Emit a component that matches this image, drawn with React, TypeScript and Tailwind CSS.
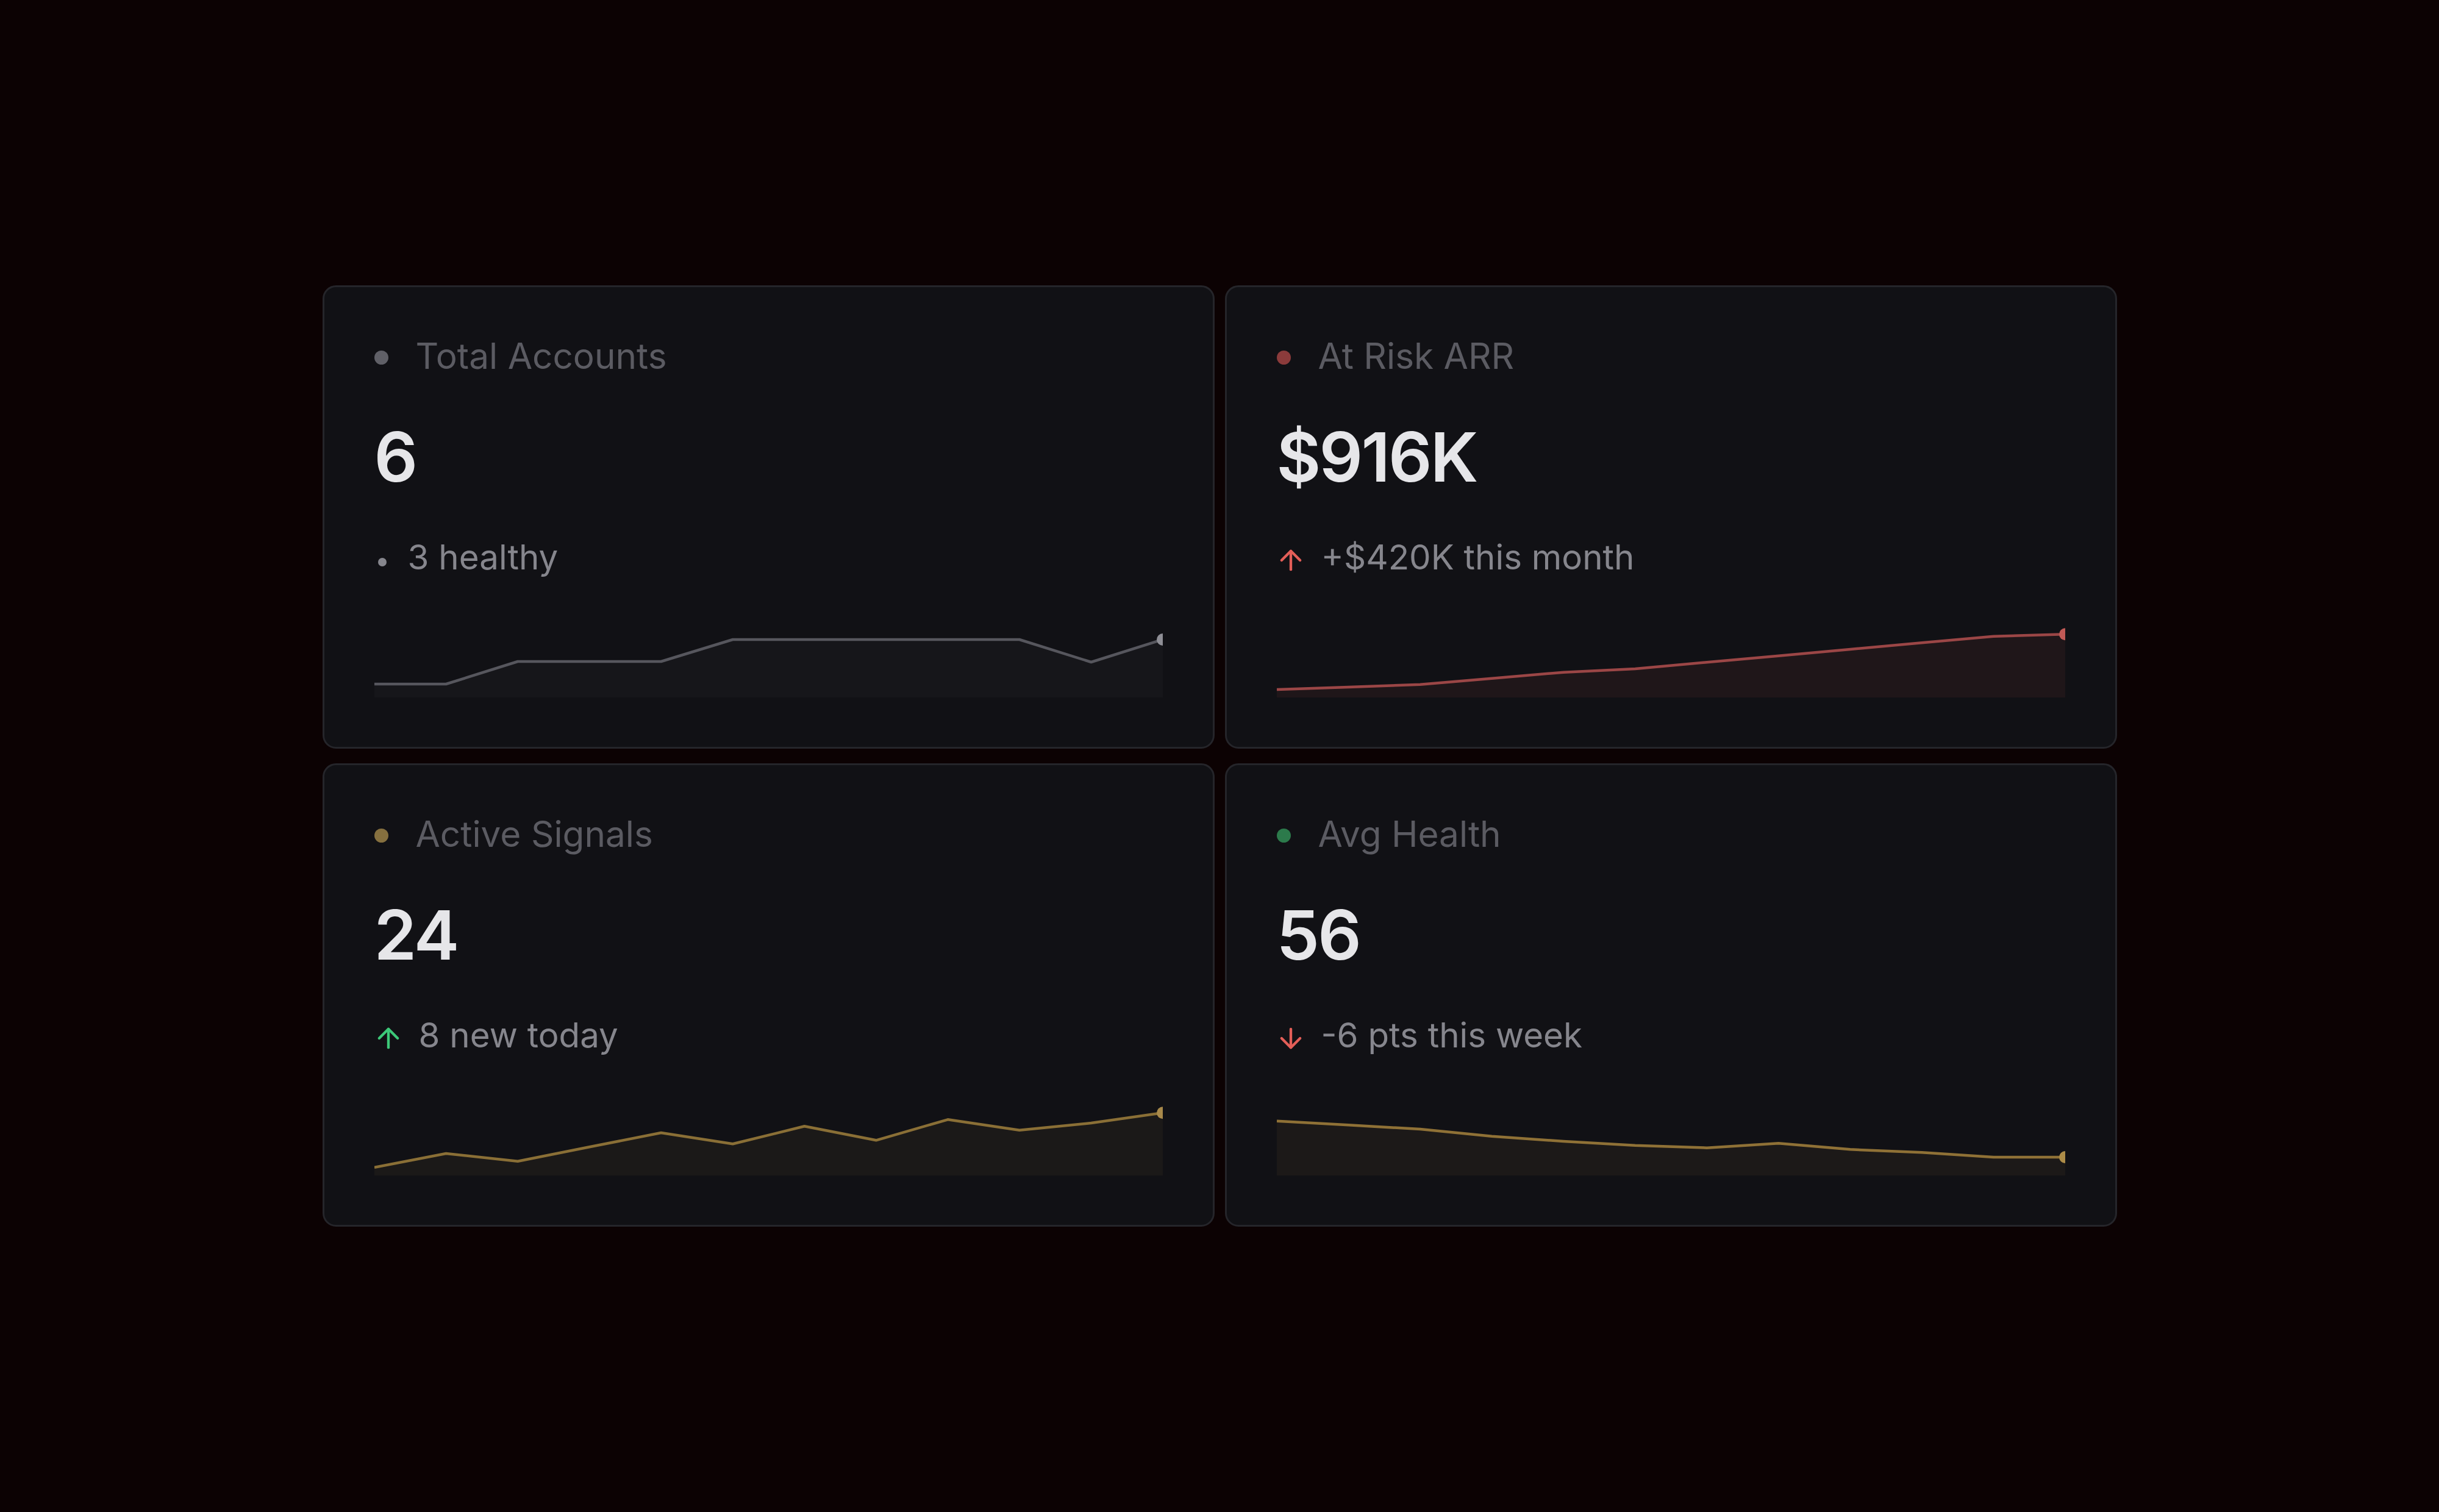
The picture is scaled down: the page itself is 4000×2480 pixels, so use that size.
import React from "react";
import { ArrowUp, ArrowDown } from "lucide-react";

type Trend = "up" | "down" | "dot";

interface Metric {
  label: string;
  value: string;
  note: string;
  trend: Trend;
  dotClass: string;
  trendClass: string;
  line: string;
  marker: string;
  fill: number;
  points: number[];
}

const CHART_W = 1293;
const CHART_H = 150;

const metrics: Metric[] = [
  {
    label: "Total Accounts",
    value: "6",
    note: "3 healthy",
    trend: "dot",
    dotClass: "bg-[#606067]",
    trendClass: "bg-[#86868d]",
    line: "#56565d",
    marker: "#8e8e95",
    fill: 0.08,
    points: [128, 128, 91, 91, 91, 55, 55, 55, 55, 55, 92, 55],
  },
  {
    label: "At Risk ARR",
    value: "$916K",
    note: "+$420K this month",
    trend: "up",
    dotClass: "bg-[#8b3b3b]",
    trendClass: "text-[#e35e58]",
    line: "#9b4646",
    marker: "#c15a56",
    fill: 0.1,
    points: [137, 133, 128.7, 118.7, 108.7, 103, 92.3, 81.7, 71, 60.3, 49.7, 46.3],
  },
  {
    label: "Active Signals",
    value: "24",
    note: "8 new today",
    trend: "up",
    dotClass: "bg-[#86703f]",
    trendClass: "text-[#3cc878]",
    line: "#8a6f36",
    marker: "#a8894a",
    fill: 0.09,
    points: [136.7, 114, 126.7, 103.3, 80, 98.3, 69.3, 92.3, 58.3, 75.7, 64, 47.3],
  },
  {
    label: "Avg Health",
    value: "56",
    note: "-6 pts this week",
    trend: "down",
    dotClass: "bg-[#2c7a4b]",
    trendClass: "text-[#e35e58]",
    line: "#8f7136",
    marker: "#ad8c48",
    fill: 0.09,
    points: [60.7, 67.3, 74, 85.7, 94, 100.7, 104.7, 97.3, 107.3, 112.3, 120, 120],
  },
];

function Sparkline({ points, line, marker, fill }: { points: number[]; line: string; marker: string; fill: number }) {
  const step = CHART_W / (points.length - 1);
  const coords = points.map((y, i) => [i * step, y] as const);
  const linePath = coords.map(([x, y], i) => `${i === 0 ? "M" : "L"}${x.toFixed(1)} ${y}`).join(" ");
  const areaPath = `${linePath} L${CHART_W} ${CHART_H} L0 ${CHART_H} Z`;
  const [lx, ly] = coords[coords.length - 1];
  return (
    <svg
      className="mt-auto block h-[150px] w-full overflow-hidden"
      viewBox={`0 0 ${CHART_W} ${CHART_H}`}
      preserveAspectRatio="none"
    >
      <path d={areaPath} fill={line} fillOpacity={fill} />
      <path d={linePath} fill="none" stroke={line} strokeWidth={4.5} strokeLinejoin="round" />
      <circle cx={lx} cy={ly} r={10} fill={marker} />
    </svg>
  );
}

function TrendMark({ trend, cls }: { trend: Trend; cls: string }) {
  if (trend === "dot") {
    return (
      <span className="mr-[29px] mt-[16px] flex h-[26px] w-[26px] shrink-0 items-center justify-center">
        <span className={`h-[14px] w-[14px] rounded-full ${cls}`} />
      </span>
    );
  }
  const Icon = trend === "up" ? ArrowUp : ArrowDown;
  return (
    <span className={`-ml-[3px] mr-[24px] mt-[9px] flex h-[52px] w-[52px] shrink-0 items-center justify-center ${cls}`}>
      <Icon size={52} strokeWidth={2} />
    </span>
  );
}

function MetricCard({ m }: { m: Metric }) {
  return (
    <div className="flex h-[760px] flex-col rounded-[22px] border-[3px] border-[#25252a] bg-[#111115] px-[82px] pb-[81px] pt-[73px]">
      <div className="flex h-[80px] items-center">
        <span className={`mt-[4px] h-[23px] w-[23px] shrink-0 rounded-full ${m.dotClass}`} />
        <span className="ml-[45px] text-[58.5px] leading-[80px] text-[#5b5b62]">{m.label}</span>
      </div>
      <div className="mt-[69px] h-[112px] text-[112px] font-semibold leading-[112px] tracking-[-0.025em] text-[#e6e6e9]">
        {m.value}
      </div>
      <div className="mt-[69px] flex h-[80px] items-center">
        <TrendMark trend={m.trend} cls={m.trendClass} />
        <span className="text-[56.5px] leading-[80px] text-[#86868d]">{m.note}</span>
      </div>
      <Sparkline points={m.points} line={m.line} marker={m.marker} fill={m.fill} />
    </div>
  );
}

export default function App() {
  return (
    <div className="flex h-[2480px] w-full items-center justify-center bg-[#0c0203] font-[family-name:Inter,sans-serif]">
      <div className="grid grid-cols-[1463px_1463px] gap-x-[17px] gap-y-[24px]">
        {metrics.map((m) => (
          <MetricCard key={m.label} m={m} />
        ))}
      </div>
    </div>
  );
}
